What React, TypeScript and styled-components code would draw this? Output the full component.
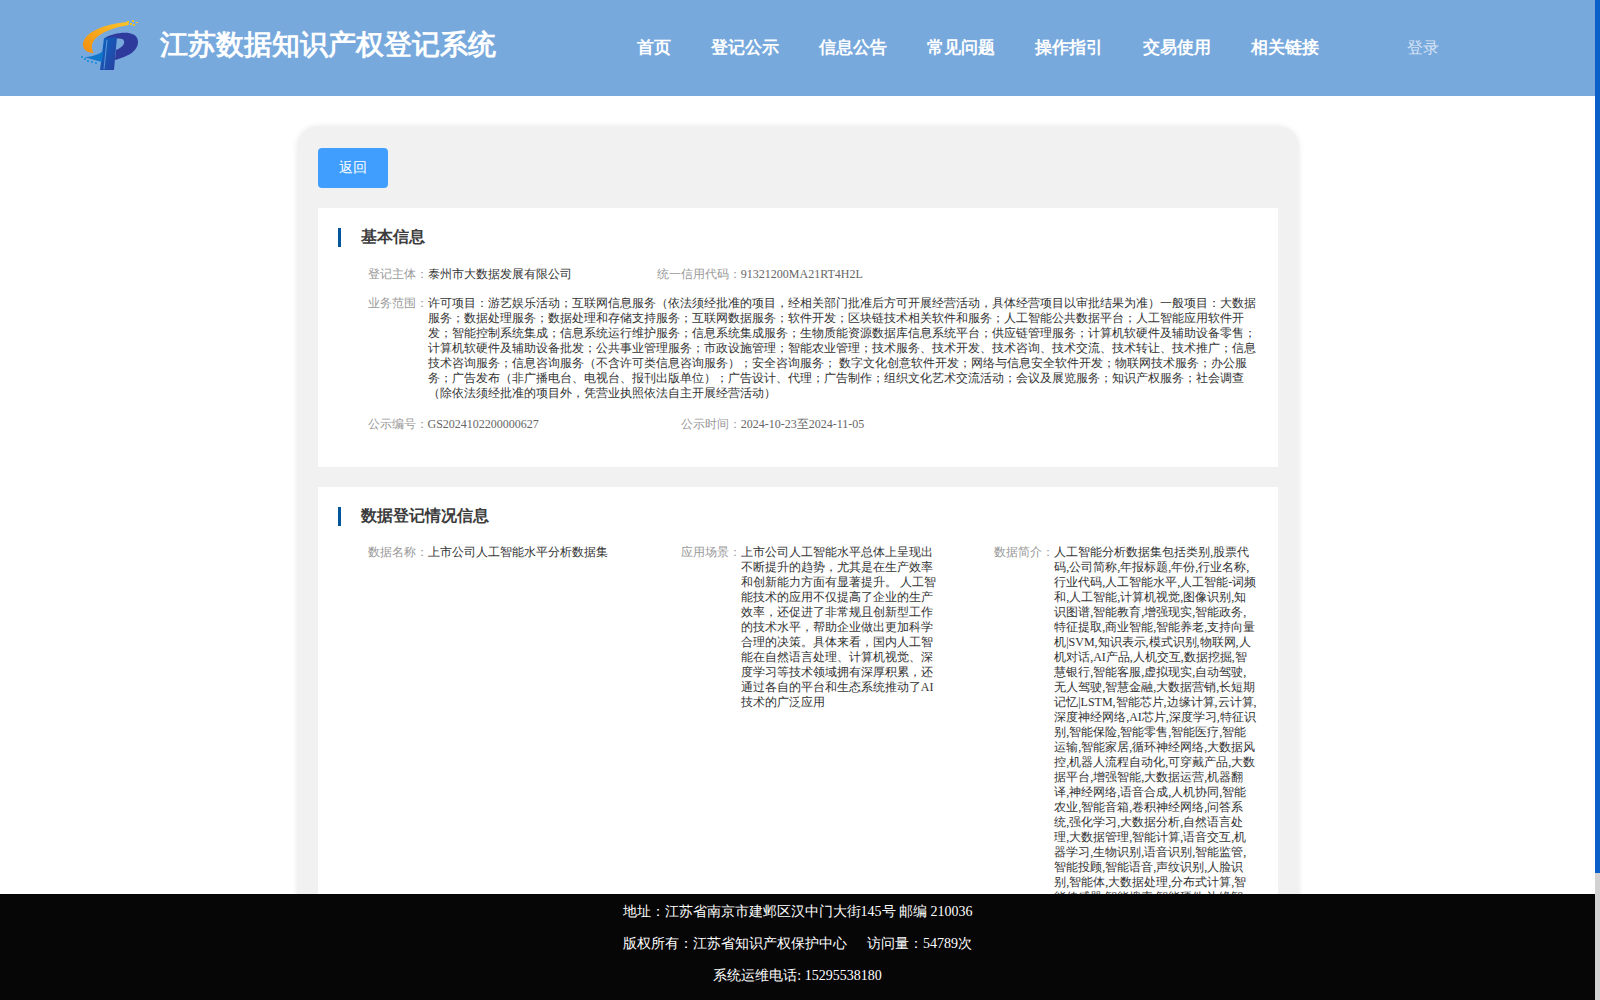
import React from 'react';
import styled, { createGlobalStyle } from 'styled-components';

const GlobalStyle = createGlobalStyle`
  body {
    margin: 0;
    background: #fff;
    font-family: 'Liberation Serif', serif;
  }
`;

const navItems = ['首页', '登记公示', '信息公告', '常见问题', '操作指引', '交易使用', '相关链接'];

const scope =
  '许可项目：游艺娱乐活动；互联网信息服务（依法须经批准的项目，经相关部门批准后方可开展经营活动，具体经营项目以审批结果为准）一般项目：大数据服务；数据处理服务；数据处理和存储支持服务；互联网数据服务；软件开发；区块链技术相关软件和服务；人工智能公共数据平台；人工智能应用软件开发；智能控制系统集成；信息系统运行维护服务；信息系统集成服务；生物质能资源数据库信息系统平台；供应链管理服务；计算机软硬件及辅助设备零售；计算机软硬件及辅助设备批发；公共事业管理服务；市政设施管理；智能农业管理；技术服务、技术开发、技术咨询、技术交流、技术转让、技术推广；信息技术咨询服务；信息咨询服务（不含许可类信息咨询服务）；安全咨询服务； 数字文化创意软件开发；网络与信息安全软件开发；物联网技术服务；办公服务；广告发布（非广播电台、电视台、报刊出版单位）；广告设计、代理；广告制作；组织文化艺术交流活动；会议及展览服务；知识产权服务；社会调查（除依法须经批准的项目外，凭营业执照依法自主开展经营活动）';

const scene =
  '上市公司人工智能水平总体上呈现出不断提升的趋势，尤其是在生产效率和创新能力方面有显著提升。 人工智能技术的应用不仅提高了企业的生产效率，还促进了非常规且创新型工作的技术水平，帮助企业做出更加科学合理的决策。具体来看，国内人工智能在自然语言处理、计算机视觉、深度学习等技术领域拥有深厚积累，还通过各自的平台和生态系统推动了AI技术的广泛应用';

const intro =
  '人工智能分析数据集包括类别,股票代码,公司简称,年报标题,年份,行业名称,行业代码,人工智能水平,人工智能-词频和,人工智能,计算机视觉,图像识别,知识图谱,智能教育,增强现实,智能政务,特征提取,商业智能,智能养老,支持向量机|SVM,知识表示,模式识别,物联网,人机对话,AI产品,人机交互,数据挖掘,智慧银行,智能客服,虚拟现实,自动驾驶,无人驾驶,智慧金融,大数据营销,长短期记忆|LSTM,智能芯片,边缘计算,云计算,深度神经网络,AI芯片,深度学习,特征识别,智能保险,智能零售,智能医疗,智能运输,智能家居,循环神经网络,大数据风控,机器人流程自动化,可穿戴产品,大数据平台,增强智能,大数据运营,机器翻译,神经网络,语音合成,人机协同,智能农业,智能音箱,卷积神经网络,问答系统,强化学习,大数据分析,自然语言处理,大数据管理,智能计算,语音交互,机器学习,生物识别,语音识别,智能监管,智能投顾,智能语音,声纹识别,人脸识别,智能体,大数据处理,分布式计算,智能传感器,智能搜索,智能硬件,边缘智能,云原生,数据中台';

const Viewport = styled.div`
  display: flex;
  height: 100vh;
  overflow: hidden;
`;

const ScrollArea = styled.div`
  flex: 1;
  min-width: 0;
  overflow-y: auto;
`;

const ScrollRail = styled.div`
  flex: none;
  width: 5px;
  background: #d2d2d2;
`;

const ScrollThumb = styled.div`
  height: 873px;
  background: #0a5fc8;
`;

const Header = styled.header`
  display: flex;
  align-items: center;
  height: 96px;
  background: #78a9dd;
  color: #fff;
`;

const Brand = styled.div`
  display: flex;
  align-items: center;
  width: 637px;
  padding-left: 70px;
  box-sizing: border-box;
`;

const Logo = styled.svg`
  display: block;
  width: 80px;
  height: 70px;
  margin-bottom: 6px;
  flex: none;
`;

const SiteTitle = styled.h1`
  margin: 0 0 6px 10px;
  font-size: 28px;
  line-height: 1;
  font-weight: 700;
  white-space: nowrap;
`;

const Nav = styled.nav`
  display: flex;
  gap: 40px;
  width: 770px;
  margin-bottom: 2px;
`;

const NavLink = styled.a`
  font-size: 17px;
  font-weight: 700;
  white-space: nowrap;
`;

const Login = styled.a`
  font-size: 16px;
  color: rgba(255, 255, 255, 0.7);
`;

const Card = styled.main`
  box-sizing: border-box;
  width: 1000px;
  margin: 31px auto 20px;
  padding: 21px 20px 20px;
  background: #f1f1f1;
  border-radius: 20px;
  box-shadow: 0 0 6px rgba(0, 0, 0, 0.12);
`;

const BackButton = styled.button`
  display: block;
  width: 70px;
  height: 40px;
  padding: 0;
  border: 0;
  border-radius: 4px;
  background: #409eff;
  color: #fff;
  font-family: inherit;
  font-size: 14px;
`;

const Panel = styled.section`
  margin-top: 20px;
  padding: 20px 10px 35px;
  background: #fff;
`;

const PanelTitle = styled.h2`
  margin: 0 0 0 10px;
  padding-left: 20px;
  border-left: 3px solid #00559b;
  height: 19px;
  font-size: 16px;
  line-height: 17px;
  font-weight: 700;
  color: #3c3c3c;
`;

const Grid = styled.div<{ $top: number }>`
  display: grid;
  grid-template-columns: repeat(3, 1fr);
  row-gap: 14px;
  margin-top: ${(p) => p.$top}px;
`;

const Field = styled.div<{ $wide?: boolean }>`
  display: flex;
  grid-column: ${(p) => (p.$wide ? '1 / -1' : 'auto')};
  margin-bottom: ${(p) => (p.$wide ? '2px' : '0')};
  font-size: 12px;
  line-height: 15px;
  color: #333;
`;

const Label = styled.span`
  flex: none;
  width: 100px;
  text-align: right;
  color: #999;
  white-space: nowrap;
`;

const Value = styled.div<{ $wide?: boolean; $muted?: boolean }>`
  width: ${(p) => (p.$wide ? '830px' : '203.5px')};
  color: ${(p) => (p.$muted ? '#666' : 'inherit')};
  word-break: break-all;
`;

const Footer = styled.footer`
  position: fixed;
  left: 0;
  right: 5px;
  bottom: 0;
  height: 106px;
  padding-top: 2px;
  box-sizing: border-box;
  background: #060606;
  color: #fff;
  font-size: 14px;
  line-height: 32px;
  text-align: center;
`;

const Gap = styled.span`
  display: inline-block;
  width: 20px;
`;

const App: React.FC = () => {
  return (
    <Viewport>
      <GlobalStyle />
      <ScrollArea>
        <Header>
          <Brand>
            <Logo viewBox="70 10 80 70">
              <defs>
                <linearGradient id="arc" x1="0" y1="1" x2="1" y2="0">
                  <stop offset="0" stopColor="#f28d10" />
                  <stop offset="1" stopColor="#fbc42a" />
                </linearGradient>
                <linearGradient id="stem" x1="0" y1="0" x2="1" y2="1">
                  <stop offset="0" stopColor="#0a66c4" />
                  <stop offset="1" stopColor="#2b3f9f" />
                </linearGradient>
              </defs>
              <path d="M128 22 C110 23 86 30 83 43 C82 49 87 53 94 53 C91 49 91 44 95 39 C101 32 115 27 129 25 Z" fill="url(#arc)" />
              <path d="M105 38 C115 32 138 29 138 42 C138 52 126 57 115 60 L116 50 C121 48 125 45 124 41 C123 38 117 38 113 40 Z" fill="#2e3a9c" />
              <path d="M104 38 L117 37 L114 70 L100 70 Z" fill="url(#stem)" />
              <path d="M84 57 C90 57 98 55 103 51 L102 62 C95 60 90 59 84 57 Z" fill="#1177cc" />
              <path d="M107 40 L104 69" stroke="#7ab4e8" strokeWidth="0.7" fill="none" />
              <g fill="#f6c21e">
                <rect x="127" y="21" width="2" height="2" />
                <rect x="130" y="23" width="2" height="2" />
                <rect x="133" y="24" width="2" height="2" />
                <rect x="132" y="20" width="2" height="2" />
                <rect x="136" y="22" width="2" height="1" />
              </g>
              <g fill="#2a93dc">
                <rect x="81" y="56" width="2" height="2" />
                <rect x="84" y="58" width="2" height="2" />
                <rect x="87" y="60" width="2" height="2" />
                <rect x="91" y="61" width="2" height="2" />
                <rect x="95" y="62" width="2" height="2" />
              </g>
            </Logo>
            <SiteTitle>江苏数据知识产权登记系统</SiteTitle>
          </Brand>
          <Nav>
            {navItems.map((item) => (
              <NavLink key={item}>{item}</NavLink>
            ))}
          </Nav>
          <Login>登录</Login>
        </Header>
        <Card>
          <BackButton>返回</BackButton>
          <Panel>
            <PanelTitle>基本信息</PanelTitle>
            <Grid $top={20}>
              <Field>
                <Label>登记主体：</Label>
                <Value>泰州市大数据发展有限公司</Value>
              </Field>
              <Field>
                <Label>统一信用代码：</Label>
                <Value $muted>91321200MA21RT4H2L</Value>
              </Field>
              <span />
              <Field $wide>
                <Label>业务范围：</Label>
                <Value $wide>{scope}</Value>
              </Field>
              <Field>
                <Label>公示编号：</Label>
                <Value $muted>GS2024102200000627</Value>
              </Field>
              <Field>
                <Label>公示时间：</Label>
                <Value $muted>2024-10-23至2024-11-05</Value>
              </Field>
            </Grid>
          </Panel>
          <Panel>
            <PanelTitle>数据登记情况信息</PanelTitle>
            <Grid $top={19}>
              <Field>
                <Label>数据名称：</Label>
                <Value>上市公司人工智能水平分析数据集</Value>
              </Field>
              <Field>
                <Label>应用场景：</Label>
                <Value>{scene}</Value>
              </Field>
              <Field>
                <Label>数据简介：</Label>
                <Value>{intro}</Value>
              </Field>
            </Grid>
          </Panel>
        </Card>
        <Footer>
          <div>地址：江苏省南京市建邺区汉中门大街145号 邮编 210036</div>
          <div>
            版权所有：江苏省知识产权保护中心<Gap />访问量：54789次
          </div>
          <div>系统运维电话: 15295538180</div>
        </Footer>
      </ScrollArea>
      <ScrollRail>
        <ScrollThumb />
      </ScrollRail>
    </Viewport>
  );
};

export default App;
